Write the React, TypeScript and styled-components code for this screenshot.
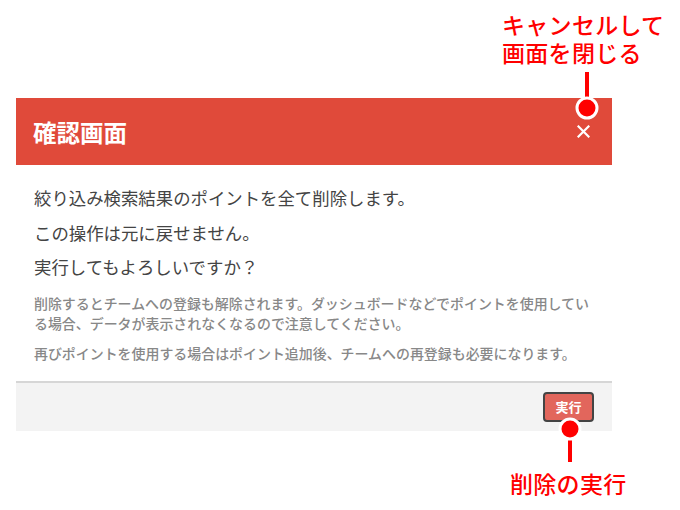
import React from 'react'
import styled, { createGlobalStyle } from 'styled-components'

const GlobalStyle = createGlobalStyle`
  body {
    margin: 0;
    background: #fff;
    font-family: "Noto Sans CJK JP", "Noto Sans", sans-serif;
  }
`

const Stage = styled.div`
  position: relative;
  width: 680px;
  height: 510px;
  box-sizing: border-box;
  padding: 98px 68px 0 16px;
  overflow: hidden;
`

const Modal = styled.div`
  width: 596px;
  display: flex;
  flex-direction: column;
`

const Header = styled.div`
  height: 67px;
  display: flex;
  align-items: center;
  justify-content: space-between;
  padding: 0 21px 0 17px;
  background: #e04a3a;
`

const Title = styled.h1`
  margin: 0;
  font-size: 23.5px;
  font-weight: 700;
  color: #fff;
`

const CloseButton = styled.button`
  display: flex;
  align-items: center;
  justify-content: center;
  width: 16px;
  height: 16px;
  padding: 0;
  border: none;
  background: transparent;
  cursor: pointer;
`

const Body = styled.div`
  padding: 21px 18px 18px;
  display: flex;
  flex-direction: column;
`

const Lead = styled.p`
  margin: 0 0 10.5px;
  font-size: 17.4px;
  line-height: 24px;
  color: #444;
`

const NoteGroup = styled.div`
  margin-top: 3px;
  display: flex;
  flex-direction: column;
  gap: 10px;
`

const Note = styled.p`
  margin: 0;
  font-size: 13.95px;
  line-height: 20px;
  color: #888;
  font-weight: 500;
`

const Footer = styled.div`
  display: flex;
  justify-content: flex-end;
  padding: 9px 18px;
  background: #f3f3f3;
  border-top: 2px solid #d6d6d6;
`

const ExecButton = styled.button`
  width: 51px;
  height: 30px;
  padding: 0;
  border: 2px solid #444;
  border-radius: 4px;
  background: #e2665c;
  color: #fff;
  font-family: inherit;
  font-size: 13px;
  font-weight: 700;
  cursor: pointer;
`

const CalloutText = styled.div<{ $top: number; $left: number }>`
  position: absolute;
  top: ${(p) => p.$top}px;
  left: ${(p) => p.$left}px;
  display: flex;
  flex-direction: column;
  gap: 2px;
  font-size: 23px;
  line-height: 26px;
  letter-spacing: 0.3px;
  font-weight: 500;
  color: #f00;
  white-space: nowrap;
`

const Pin = styled.svg<{ $top: number; $left: number }>`
  position: absolute;
  top: ${(p) => p.$top}px;
  left: ${(p) => p.$left}px;
  overflow: visible;
`

export default function App() {
  return (
    <Stage>
      <GlobalStyle />
      <Modal>
        <Header>
          <Title>確認画面</Title>
          <CloseButton aria-label="閉じる">
            <svg width="13" height="13" viewBox="0 0 13 13">
              <path d="M1.5 1.5 L11.5 11.5 M11.5 1.5 L1.5 11.5" stroke="#fff" strokeWidth="2.2" strokeLinecap="square" />
            </svg>
          </CloseButton>
        </Header>
        <Body>
          <Lead>絞り込み検索結果のポイントを全て削除します。</Lead>
          <Lead>この操作は元に戻せません。</Lead>
          <Lead>実行してもよろしいですか？</Lead>
          <NoteGroup>
            <Note>
              削除するとチームへの登録も解除されます。ダッシュボードなどでポイントを使用している場合、データが表示されなくなるので注意してください。
            </Note>
            <Note>再びポイントを使用する場合はポイント追加後、チームへの再登録も必要になります。</Note>
          </NoteGroup>
        </Body>
        <Footer>
          <ExecButton>実行</ExecButton>
        </Footer>
      </Modal>

      <CalloutText $top={11} $left={502}>
        <span>キャンセルして</span>
        <span>画面を閉じる</span>
      </CalloutText>
      <Pin $top={70} $left={574} width="26" height="52" viewBox="0 0 26 52">
        <line x1="13" y1="2" x2="13" y2="30" stroke="#f00" strokeWidth="4" />
        <circle cx="13" cy="38" r="10" fill="#f00" stroke="#fff" strokeWidth="3" />
      </Pin>

      <Pin $top={417} $left={557} width="26" height="48" viewBox="0 0 26 48">
        <line x1="13" y1="20" x2="13" y2="45" stroke="#f00" strokeWidth="4" />
        <circle cx="13" cy="12" r="10" fill="#f00" stroke="#fff" strokeWidth="3" />
      </Pin>
      <CalloutText $top={470} $left={510}>
        <span>削除の実行</span>
      </CalloutText>
    </Stage>
  )
}
